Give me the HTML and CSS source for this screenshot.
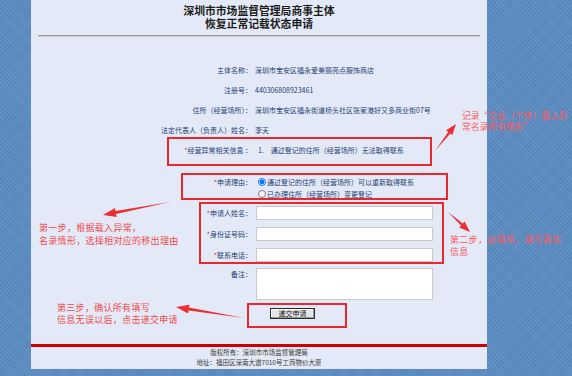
FILE: index.html
```html
<!DOCTYPE html>
<html lang="zh-CN">
<head>
<meta charset="utf-8">
<title>恢复正常记载状态申请</title>
<link rel="stylesheet" href="styles.css">
</head>
<body>
<div class="page">
  <div class="header">
    <div>深圳市市场监督管理局商事主体</div>
    <div>恢复正常记载状态申请</div>
  </div>
  <div class="rule"></div>
  <div class="form">
    <div class="row row-info"><div class="label">主体名称：</div><div class="value">深圳市宝安区福永爱美丽亮点服饰商店</div></div>
    <div class="row row-info"><div class="label">注册号：</div><div class="value">440306808923461</div></div>
    <div class="row row-info"><div class="label">住所（经营场所）：</div><div class="value">深圳市宝安区福永街道桥头社区张家港好又多商业街07号</div></div>
    <div class="row row-info"><div class="label">法定代表人（负责人）姓名：</div><div class="value">李天</div></div>
    <div class="row row-info"><div class="label"><span class="req">*</span>经营异常相关信息 ：</div><div class="value"><span class="num">1.</span>通过登记的住所（经营场所）无法取得联系</div></div>
    <div class="row row-reason">
      <div class="label label-top"><span class="req">*</span>申请理由：</div>
      <div class="value radios">
        <label class="radio"><input type="radio" name="reason" checked>通过登记的住所（经营场所）可以重新取得联系</label>
        <label class="radio"><input type="radio" name="reason">已办理住所（经营场所）变更登记</label>
      </div>
    </div>
    <div class="inputs">
      <div class="row row-input"><div class="label"><span class="req">*</span>申请人姓名：</div><div class="value"><input class="text" type="text"></div></div>
      <div class="row row-input"><div class="label"><span class="req">*</span>身份证号码：</div><div class="value"><input class="text" type="text"></div></div>
      <div class="row row-input"><div class="label"><span class="req">*</span>联系电话：</div><div class="value"><input class="text" type="text"></div></div>
    </div>
    <div class="row row-note"><div class="label label-top">备注：</div><div class="value"><textarea class="note"></textarea></div></div>
    <div class="row row-submit"><div></div><div class="value"><button class="submit" type="button">递交申请</button></div></div>
  </div>
  <div class="footer">
    <div>版权所有：深圳市市场监督管理局</div>
    <div>地址：福田区深南大道7010号工商物价大厦</div>
  </div>
</div>

<div class="notes">
  <div class="box box1"></div>
  <div class="box box2"></div>
  <div class="box box3"></div>
  <div class="box box4"></div>
  <svg class="arrows" width="572" height="376" viewBox="0 0 572 376">
    <polygon points="435,151 450.3,133.5 452.4,135.1 456,124 446.1,130.2 448.2,131.9"/>
    <polygon points="170,202 115.5,211 114.9,208.1 103,215 116.7,216.9 116.1,214"/>
    <polygon points="448,212 461,225.6 459.2,227.6 470,232 464.6,221.6 462.8,223.6"/>
    <polygon points="244,318 189,307.6 189.5,304.7 176,307 188.1,313.5 188.6,310.6"/>
  </svg>
  <div class="tip tip1">记录“企业（个体）载入异<br>常名录所有情形”</div>
  <div class="tip tip2">第一步，根据载入异常，<br>名录情形，选择相对应的移出理由</div>
  <div class="tip tip3">第二步，必填项，填写真实<br>信息</div>
  <div class="tip tip4">第三步，确认所有填写<br>信息无误以后，点击递交申请</div>
</div>
</body>
</html>
```
FILE: styles.css
```css
* { box-sizing: border-box; }
html, body { margin: 0; padding: 0; }
body {
  width: 572px;
  height: 376px;
  position: relative;
  overflow: hidden;
  background-color: #5a8cc2;
  background-image:
    repeating-linear-gradient(45deg, rgba(255,255,255,0.07) 0 1px, transparent 1px 3px),
    repeating-linear-gradient(-45deg, rgba(0,0,0,0.06) 0 1px, transparent 1px 3px);
  font-family: "Noto Sans CJK SC", sans-serif;
  font-size: 7px;
  color: #1f3f74;
}
.page {
  margin-left: 31px;
  width: 456px;
  height: 369px;
  background: #e3e9f6;
  display: flex;
  flex-direction: column;
}
.header {
  padding-top: 4px;
  text-align: center;
  font-size: 10.8px;
  line-height: 13px;
  font-weight: 700;
  color: #1c1c1c;
}
.rule {
  margin: 5px 7px 0;
  border-top: 1px solid #9a9a9a;
  border-bottom: 1px solid #cacaca;
}
.form {
  padding-top: 23px;
  display: flex;
  flex-direction: column;
}
.row {
  display: grid;
  grid-template-columns: 221px 1fr;
  column-gap: 3px;
  align-items: center;
  line-height: 12px;
}
.row-info { height: 20px; }
.label { text-align: right; white-space: nowrap; }
.label-top { align-self: start; }
.value { white-space: nowrap; }
.req { color: #e0272c; }
.num { margin-left: 3px; margin-right: 7px; }
.row-reason { margin-top: 16px; height: 24px; align-items: start; }
.radios { display: flex; flex-direction: column; }
.radio { display: flex; align-items: center; height: 12px; }
.radio input {
  width: 8px;
  height: 8px;
  margin: 0 1px 0 3px;
}
.inputs { margin-top: 2px; display: flex; flex-direction: column; }
.row-input { height: 21px; }
.text {
  display: block;
  margin-left: 1px;
  width: 177px;
  height: 14px;
  border: 1px solid #c9c9c9;
  background: #fff;
  padding: 0;
}
.row-note { margin-top: 3px; align-items: start; }
.note {
  display: block;
  margin: 0 0 0 1px;
  width: 177px;
  height: 32px;
  border: 1px solid #c9c9c9;
  background: #fff;
  resize: none;
  padding: 0;
}
.row-submit { margin-top: 8px; }
.submit {
  display: block;
  margin-left: 15px;
  width: 45px;
  height: 11px;
  padding: 0;
  font-family: "Noto Sans CJK SC", sans-serif;
  font-size: 7px;
  line-height: 9px;
  color: #111;
  background: #e6e6e6;
  border: 1px solid #2a2a2a;
  box-shadow: inset -1px -1px 0 #9a9a9a, inset 1px 1px 0 #ffffff;
}
.footer {
  margin-top: auto;
  border-top: 3px solid #d10000;
  padding-bottom: 2px;
  text-align: center;
  font-size: 6.5px;
  line-height: 10px;
  color: #3c3c3c;
}

.notes {
  position: absolute;
  left: 0;
  top: 0;
  width: 572px;
  height: 376px;
  pointer-events: none;
}
.box {
  position: absolute;
  border: 2px solid #e8282d;
}
.box1 { left: 167px; top: 137px; width: 265px; height: 29px; }
.box2 { left: 181px; top: 173px; width: 267px; height: 27px; }
.box3 { left: 199px; top: 202px; width: 245px; height: 62px; }
.box4 { left: 247px; top: 303px; width: 100px; height: 25px; }
.arrows { position: absolute; left: 0; top: 0; }
.arrows polygon { fill: #ec2f33; }
.tip {
  position: absolute;
  white-space: nowrap;
  font-size: 9px;
  letter-spacing: 0.3px;
  color: #f24a4c;
}
.tip1 { left: 462px; top: 109.5px; line-height: 11px; letter-spacing: 0; font-size: 8.8px; color: #ff5a5c; }
.tip2 { left: 39px; top: 220.5px; line-height: 13px; }
.tip3 { left: 450px; top: 234px; line-height: 12px; color: #ff5a5c; }
.tip4 { left: 57px; top: 301.5px; line-height: 12px; }
```
